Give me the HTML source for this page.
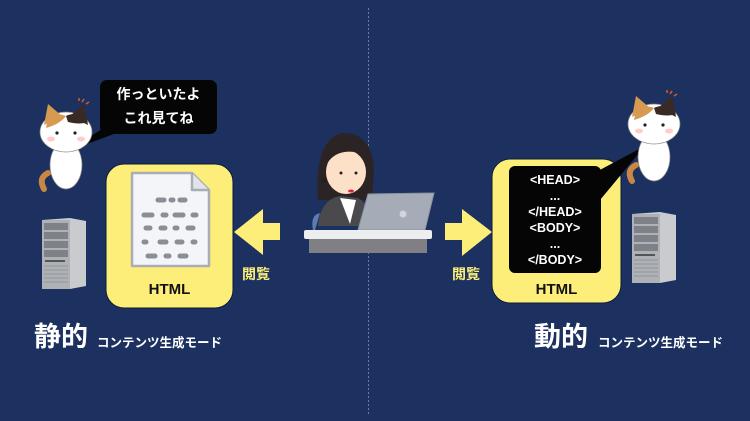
<!DOCTYPE html>
<html><head><meta charset="utf-8"><style>
body{margin:0;width:750px;height:421px;background:#1d3160;overflow:hidden;position:relative;font-family:"Liberation Sans","Noto Sans CJK JP",sans-serif}
.a{position:absolute}
.t{color:#fff;font-weight:bold}
</style></head><body>
<svg class="a" style="left:0;top:0" width="750" height="421">
<line x1="368.5" y1="8" x2="368.5" y2="414" stroke="#6b7ca3" stroke-width="1" stroke-dasharray="2,2"/>
<rect x="106" y="164" width="127" height="144" rx="18" fill="#fcee78" stroke="#0d1a3a" stroke-width="1"/>
<path d="M132 173 H192 L209 190 V266 H132 Z" fill="#f4f5f8" stroke="#a9adb5" stroke-width="2.5" stroke-linejoin="round"/>
<path d="M192 173 V190 H209" fill="#e1e3e8" stroke="#a9adb5" stroke-width="2.5" stroke-linejoin="round"/>
<g stroke="#8a8e96" stroke-width="5" stroke-linecap="round">
<line x1="158" y1="200" x2="164" y2="200"/><line x1="171" y1="200" x2="173" y2="200"/><line x1="180" y1="200" x2="185" y2="200"/>
<line x1="144" y1="215" x2="152" y2="215"/><line x1="163" y1="215" x2="166" y2="215"/><line x1="175" y1="215" x2="183" y2="215"/><line x1="193" y1="215" x2="196" y2="215"/>
<line x1="146" y1="228" x2="150" y2="228"/><line x1="161" y1="228" x2="165" y2="228"/><line x1="175" y1="228" x2="177" y2="228"/><line x1="188" y1="228" x2="193" y2="228"/>
<line x1="144" y1="242" x2="146" y2="242"/><line x1="160" y1="242" x2="166" y2="242"/><line x1="177" y1="242" x2="182" y2="242"/><line x1="193" y1="242" x2="195" y2="242"/>
<line x1="148" y1="256" x2="155" y2="256"/><line x1="166" y1="256" x2="169" y2="256"/><line x1="180" y1="256" x2="186" y2="256"/>
</g>
<path d="M234 232 L263 209 V223 H280 V240 H263 V255 Z" fill="#fcee78"/>
<path d="M492 232 L462 209 V223 H445 V240 H462 V256 Z" fill="#fcee78"/>
<rect x="492" y="159" width="129" height="144" rx="18" fill="#fcee78" stroke="#0d1a3a" stroke-width="1"/>
<rect x="509" y="166" width="92" height="107" rx="6" fill="#050505"/>
<path d="M596 172 L645 146 L600 200 Z" fill="#050505"/>
<rect x="100" y="80" width="117" height="54" rx="7" fill="#050505"/>
<path d="M108 125 L68 151 L130 128 Z" fill="#050505"/>
<g id="srv">
<path d="M42 220 L70 218 L86 221 V286 L70 289 H42 Z" fill="#c9cbcf"/>
<rect x="42" y="220" width="28" height="69" fill="#aeb1b6"/>
<rect x="44" y="223" width="24" height="7" fill="#7e8288"/><rect x="44" y="232" width="24" height="7" fill="#7e8288"/><rect x="44" y="241" width="24" height="7" fill="#7e8288"/><rect x="44" y="250" width="24" height="7" fill="#7e8288"/>
<rect x="45" y="260" width="20" height="2" fill="#555"/>
<g stroke="#93969b" stroke-width="1"><line x1="44" y1="266" x2="68" y2="266"/><line x1="44" y1="270" x2="68" y2="270"/><line x1="44" y1="274" x2="68" y2="274"/><line x1="44" y1="278" x2="68" y2="278"/><line x1="44" y1="282" x2="68" y2="282"/></g>
</g>
<use href="#srv" transform="translate(590,-6)"/>
<g id="cat">
<ellipse cx="66" cy="165" rx="16" ry="24" fill="#fff" stroke="#888" stroke-width=".7"/>
<path d="M48 173 q-10 5 -4 16" stroke="#c88742" stroke-width="6" fill="none" stroke-linecap="round"/>
<ellipse cx="66" cy="132" rx="26" ry="20" fill="#fff" stroke="#888" stroke-width=".7"/>
<path d="M44 125 L48 104 L62 116 Z" fill="#d79a52"/><path d="M88 125 L84 104 L70 116 Z" fill="#3a2a26"/>
<path d="M48 118 Q55 112 66 116 Q60 124 46 128Z" fill="#d79a52"/>
<path d="M66 116 Q78 110 88 122 Q80 125 68 122Z" fill="#3a2a26"/>
<circle cx="57" cy="133" r="1.6" fill="#222"/><circle cx="75" cy="133" r="1.6" fill="#222"/>
<ellipse cx="51" cy="139" rx="4" ry="2.5" fill="#fcc"/><ellipse cx="81" cy="139" rx="4" ry="2.5" fill="#fcc"/>
<path d="M82 102 l2 -3 M86 104 l3 -2 M79 101 l0 -3" stroke="#e05a1a" stroke-width="1.5"/>
</g>
<use href="#cat" transform="translate(588,-8)"/>
<path d="M318 200 Q314 140 342 133 Q372 132 374 170 L372 200 Z" fill="#2c2424"/>
<ellipse cx="346" cy="172" rx="20" ry="22" fill="#fde0c8"/>
<path d="M326 165 Q338 145 366 155 Q352 142 330 150Z" fill="#2c2424"/>
<circle cx="341" cy="173" r="1.5" fill="#222"/><circle cx="356" cy="173" r="1.5" fill="#222"/>
<circle cx="324" cy="180" r="3" fill="#222"/>
<ellipse cx="351" cy="191" rx="3" ry="1.5" fill="#d24"/>
<path d="M318 226 Q320 200 340 196 L358 198 Q372 206 372 226 Z" fill="#4a4a4c"/>
<path d="M340 198 L350 224 L356 200Z" fill="#fff"/>
<path d="M315 230 L320 213 Q310 215 313 230Z" fill="#5b7db2"/>
<path d="M368 194 L434 193 L425 230 L358 230 Z" fill="#a5acb7" stroke="#8a929e" stroke-width="1"/>
<circle cx="403" cy="214" r="3.5" fill="#d0d5dc"/>
<rect x="304" y="230" width="128" height="9" rx="2" fill="#eceef0"/>
<rect x="309" y="239" width="118" height="14" fill="#7f7f84"/>
</svg>
<div class="a t" style="left:100px;top:82px;width:117px;text-align:center;font-size:14px;line-height:24px">作っといたよ<br>これ見てね</div>
<div class="a" style="left:106px;top:281px;width:127px;text-align:center;font-size:15px;font-weight:bold;color:#111">HTML</div>
<div class="a" style="left:492px;top:281px;width:129px;text-align:center;font-size:15px;font-weight:bold;color:#111">HTML</div>
<div class="a t" style="left:509px;top:172px;width:92px;text-align:center;font-size:12.5px;line-height:16px">&lt;HEAD&gt;<br>...<br>&lt;/HEAD&gt;<br>&lt;BODY&gt;<br>...<br>&lt;/BODY&gt;</div>
<div class="a" style="left:242px;top:264px;font-size:14px;font-weight:bold;color:#fcee78">閲覧</div>
<div class="a" style="left:452px;top:264px;font-size:14px;font-weight:bold;color:#fcee78">閲覧</div>
<div class="a t" style="left:34px;top:315px;font-size:27px">静的</div>
<div class="a t" style="left:97px;top:332px;font-size:12.5px">コンテンツ生成モード</div>
<div class="a t" style="left:534px;top:315px;font-size:27px">動的</div>
<div class="a t" style="left:598px;top:332px;font-size:12.5px">コンテンツ生成モード</div>
</body></html>
